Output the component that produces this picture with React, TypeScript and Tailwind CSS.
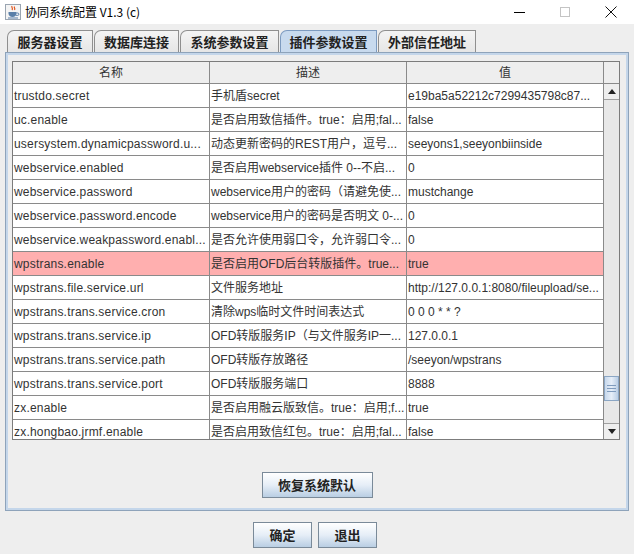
import React from 'react';

type Row = { name: string; desc: string; value: string; selected?: boolean };

const rows: Row[] = [
  { name: 'trustdo.secret', desc: '手机盾secret', value: 'e19ba5a52212c7299435798c87...' },
  { name: 'uc.enable', desc: '是否启用致信插件。true：启用;fal...', value: 'false' },
  { name: 'usersystem.dynamicpassword.u...', desc: '动态更新密码的REST用户，逗号...', value: 'seeyons1,seeyonbiinside' },
  { name: 'webservice.enabled', desc: '是否启用webservice插件  0--不启...', value: '0' },
  { name: 'webservice.password', desc: 'webservice用户的密码（请避免使...', value: 'mustchange' },
  { name: 'webservice.password.encode', desc: 'webservice用户的密码是否明文 0-...', value: '0' },
  { name: 'webservice.weakpassword.enabl...', desc: '是否允许使用弱口令，允许弱口令...', value: '0' },
  { name: 'wpstrans.enable', desc: '是否启用OFD后台转版插件。true...', value: 'true', selected: true },
  { name: 'wpstrans.file.service.url', desc: '文件服务地址', value: 'http://127.0.0.1:8080/fileupload/se...' },
  { name: 'wpstrans.trans.service.cron', desc: '清除wps临时文件时间表达式', value: '0 0 0 * * ?' },
  { name: 'wpstrans.trans.service.ip', desc: 'OFD转版服务IP（与文件服务IP一...', value: '127.0.0.1' },
  { name: 'wpstrans.trans.service.path', desc: 'OFD转版存放路径', value: '/seeyon/wpstrans' },
  { name: 'wpstrans.trans.service.port', desc: 'OFD转版服务端口', value: '8888' },
  { name: 'zx.enable', desc: '是否启用融云版致信。true：启用;f...', value: 'true' },
  { name: 'zx.hongbao.jrmf.enable', desc: '是否启用致信红包。true：启用;fal...', value: 'false' },
];

const tabs = [
  { label: '服务器设置', w: 'w-[86px]' },
  { label: '数据库连接', w: 'w-[85px]' },
  { label: '系统参数设置', w: 'w-[99px]' },
  { label: '插件参数设置', w: 'w-[97px]', active: true },
  { label: '外部信任地址', w: 'w-[98px]' },
];

const cellFont = { fontFamily: '"Liberation Sans", "Noto Sans CJK SC", sans-serif' };
const boldFont = { fontFamily: '"Noto Sans CJK SC", "Liberation Sans", sans-serif' };

const JavaIcon = () => (
  <svg width="16" height="16" viewBox="0 0 16 16" className="shrink-0">
    <rect x="0.5" y="0.5" width="15" height="15" fill="#f4f4f4" stroke="#9aa5b1" />
    <path d="M7 2c-1 1.5 1.5 2.2 0 4M9.5 2.5c-1 1.3 1.2 1.8 0 3.5" stroke="#e2541c" strokeWidth="1.2" fill="none" />
    <path d="M3.5 8h8v1.5c0 2-1.8 3.5-4 3.5s-4-1.5-4-3.5z" fill="#5a7fa8" />
    <path d="M11.5 9h1.2a1.2 1.2 0 010 2.4h-1.6" stroke="#5a7fa8" strokeWidth="1" fill="none" />
    <rect x="3" y="13.5" width="10" height="1" fill="#5a7fa8" />
  </svg>
);

const Arrow = ({ up }: { up?: boolean }) => (
  <svg width="8" height="5" viewBox="0 0 8 5">
    <path d={up ? 'M0 5L4 0L8 5Z' : 'M0 0L4 5L8 0Z'} fill="#222" />
  </svg>
);

const JButton = ({ label, w }: { label: string; w: string }) => (
  <button
    className={`${w} h-[26px] border border-[#7a8a99] bg-gradient-to-b from-[#ffffff] via-[#e6eef7] to-[#b9cee3] text-[13px] font-bold text-[#222] flex items-center justify-center`}
    style={boldFont}
  >
    {label}
  </button>
);

export default function App() {
  return (
    <div className="w-[634px] h-[554px] bg-[#eeeeee] flex flex-col overflow-hidden" style={cellFont}>
      {/* title bar */}
      <div className="h-[24px] bg-white flex items-center pl-[5px] shrink-0">
        <JavaIcon />
        <span className="ml-[4px] text-[12px] text-black" style={{ fontFamily: '"Noto Sans CJK SC", "Noto Sans", sans-serif' }}>
          协同系统配置 V1.3 (c)
        </span>
        <div className="ml-auto flex items-center h-full">
          <div className="w-[46px] h-full flex items-center justify-center">
            <div className="w-[11px] h-[1px] bg-black" />
          </div>
          <div className="w-[46px] h-full flex items-center justify-center">
            <div className="w-[10px] h-[10px] border border-[#c4c4c4]" />
          </div>
          <div className="w-[46px] h-full flex items-center justify-center">
            <svg width="12" height="12" viewBox="0 0 12 12">
              <path d="M0.5 0.5L11.5 11.5M11.5 0.5L0.5 11.5" stroke="#111" strokeWidth="1" />
            </svg>
          </div>
        </div>
      </div>

      {/* tabs */}
      <div className="mt-[6px] pl-[7px] flex gap-[1px] h-[22px] shrink-0">
        {tabs.map(t => (
          <div
            key={t.label}
            className={`${t.w} h-[22px] rounded-tl-[7px] border border-b-0 flex items-center justify-center text-[13px] font-bold text-[#222] ${
              t.active ? 'bg-[#c8daee] border-[#7d9bc0]' : 'bg-gradient-to-b from-[#f4f4f4] to-[#e6e6e6] border-[#8f8f8f]'
            }`}
            style={boldFont}
          >
            {t.label}
          </div>
        ))}
      </div>

      {/* panel */}
      <div className="ml-[5px] w-[624px] h-[459px] border border-[#8ea3ba] shadow-[inset_0_0_0_2px_#c4d6ea] bg-[#eeeeee] pl-[6px] pt-[8px] flex flex-col shrink-0">
        <div className="w-[608px] h-[379px] border border-[#7c7c7c] bg-white flex">
          <div className="w-[590px] flex flex-col">
            <div className="h-[22px] flex border-b border-[#8a8a8a] bg-[#eeeeee] text-[12px] text-[#333]">
              <div className="w-[197px] border-r border-[#8a8a8a] flex items-center justify-center">名称</div>
              <div className="w-[197px] border-r border-[#8a8a8a] flex items-center justify-center">描述</div>
              <div className="w-[196px] flex items-center justify-center">值</div>
            </div>
            <div className="h-[355px] overflow-hidden">
              {rows.map(r => (
                <div
                  key={r.name}
                  className={`h-[24px] flex border-b border-[#8a8a8a] text-[12px] text-[#333] ${r.selected ? 'bg-[#ffafaf]' : 'bg-white'}`}
                >
                  <div className="w-[197px] border-r border-[#8a8a8a] flex items-center pl-[1px] tracking-[0.2px] whitespace-nowrap overflow-hidden">{r.name}</div>
                  <div className="w-[197px] border-r border-[#8a8a8a] flex items-center pl-[1px] whitespace-nowrap overflow-hidden">{r.desc}</div>
                  <div className="w-[196px] flex items-center pl-[1px] whitespace-nowrap overflow-hidden">{r.value}</div>
                </div>
              ))}
            </div>
          </div>
          {/* scrollbar */}
          <div className="w-[16px] border-l border-[#8a8a8a] flex flex-col bg-[#eeeeee]">
            <div className="h-[22px] border-b border-[#8a8a8a] bg-[#eeeeee]" />
            <div className="h-[16px] border-b border-[#a0a0a0] flex items-center justify-center bg-[#eeeeee]">
              <Arrow up />
            </div>
            <div className="flex-1 flex flex-col bg-[#e8e8e8]">
              <div className="h-[276px]" />
              <div className="h-[25px] border border-[#8ba6c4] bg-gradient-to-r from-[#c7d8ec] via-[#e6eef8] to-[#b9cde4] flex flex-col items-center justify-center gap-[2px]">
                <div className="w-[9px] h-[1px] bg-[#7f9bbd]" />
                <div className="w-[9px] h-[1px] bg-[#7f9bbd]" />
                <div className="w-[9px] h-[1px] bg-[#7f9bbd]" />
              </div>
            </div>
            <div className="h-[16px] border-t border-[#a0a0a0] flex items-center justify-center bg-[#eeeeee]">
              <Arrow />
            </div>
          </div>
        </div>
        <div className="mt-[32px] flex justify-center pr-[6px]">
          <JButton label="恢复系统默认" w="w-[111px]" />
        </div>
      </div>

      {/* bottom buttons */}
      <div className="mt-[11px] flex justify-center gap-[6px] pr-[4px]">
        <JButton label="确定" w="w-[59px]" />
        <JButton label="退出" w="w-[59px]" />
      </div>
    </div>
  );
}
